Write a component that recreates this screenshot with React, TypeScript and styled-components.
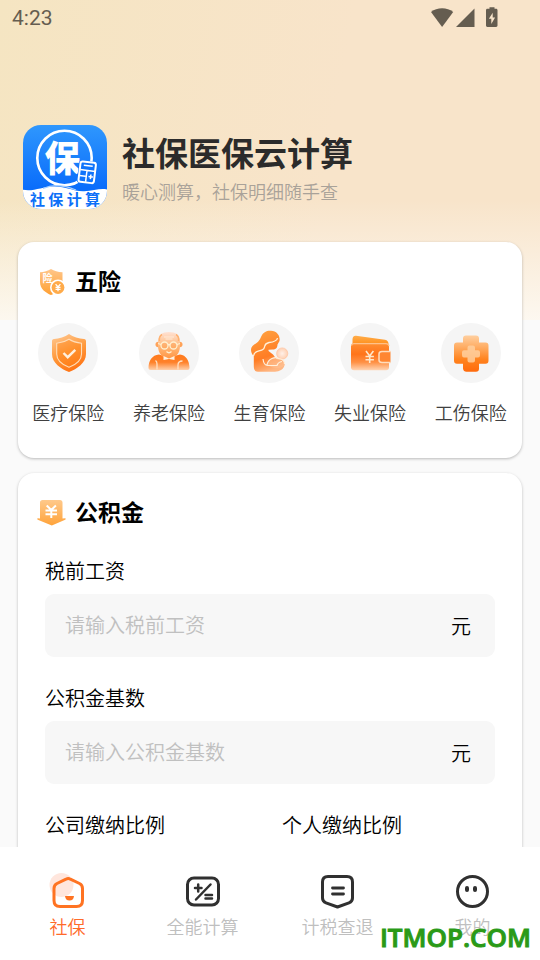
import React from "react";
import styled, { createGlobalStyle } from "styled-components";

const GlobalStyle = createGlobalStyle`
  *, *::before, *::after { box-sizing: border-box; }
  body {
    margin: 0;
    background: #fafafa;
    font-family: Roboto, "Noto Sans CJK SC", sans-serif;
    font-weight: 350;
    color: #000;
  }
  h1, h2, p { margin: 0; }
  button, input { font: inherit; color: inherit; border: 0; padding: 0; background: none; }
`;

const Screen = styled.div`
  position: relative;
  height: 100vh;
  display: flex;
  flex-direction: column;
  overflow: hidden;
  background:
    linear-gradient(to bottom, rgba(250, 250, 250, 0) 200px, rgba(253, 250, 244, 0.9) 320px, transparent 320px),
    linear-gradient(100deg, #f5e5c2, #f8e4ca 60%) top / 100% 320px no-repeat,
    #fafafa;
`;

const StatusBar = styled.header`
  flex: none;
  height: 36px;
  padding: 0 40px 0 12px;
  display: flex;
  align-items: center;
  justify-content: space-between;
  color: #655d50;
  font-size: 21px;
  line-height: 24px;
  font-weight: 450;
`;

const Content = styled.main`
  flex: 1;
  min-height: 0;
  overflow-y: auto;
  scrollbar-width: none;
  padding: 89px 18px 0;
  display: flex;
  flex-direction: column;
`;

const Profile = styled.section`
  display: flex;
  align-items: center;
  gap: 15px;
  padding: 0 5px;
  margin-bottom: 33px;
`;

const ProfileText = styled.div`
  padding-top: 5px;
`;

const Logo = styled.div`
  position: relative;
  flex: none;
  width: 84px;
  height: 84px;
  border-radius: 18px;
  overflow: hidden;
  display: flex;
  flex-direction: column;
  justify-content: flex-end;

  svg { position: absolute; inset: 0; }
`;

const LogoCaption = styled.div`
  position: relative;
  display: flex;
  justify-content: space-between;
  padding: 0 7px;
  font-size: 15px;
  line-height: 18px;
  font-weight: 700;
  color: #0d70f8;
`;

const AppName = styled.h1`
  font-size: 33px;
  line-height: 44px;
  font-weight: 700;
  color: #2b2b2b;
`;

const Tagline = styled.p`
  font-size: 18px;
  line-height: 28px;
  color: #a9a299;
  margin-top: 2px;
`;

const Card = styled.section`
  flex: none;
  background: #fff;
  border-radius: 16px;
  padding-bottom: 31px;
  margin-bottom: 15px;
  box-shadow: 0 1px 3px rgba(0, 0, 0, 0.26);
`;

const CardHeader = styled.div`
  display: flex;
  align-items: center;
  gap: 9px;
  padding: 24px 20px 0 19px;
`;

const CardTitle = styled.h2`
  font-size: 23px;
  line-height: 34px;
  font-weight: 600;
`;

const ServiceGrid = styled.div`
  display: grid;
  grid-template-columns: repeat(5, 1fr);
  padding: 23px 1px 0 0;
`;

const Service = styled.button`
  display: flex;
  flex-direction: column;
  align-items: center;
  gap: 18px;
  font-size: 18px;
  line-height: 26px;
  color: #404040;
  white-space: nowrap;
`;

const ServiceIcon = styled.span`
  width: 60px;
  height: 60px;
  border-radius: 50%;
  background: #f5f5f5;
  display: block;
`;

const Form = styled.form`
  padding: 26px 27px 0;
  display: flex;
  flex-direction: column;
  gap: 27px;
`;

const FieldGroup = styled.div`
  display: flex;
  flex-direction: column;
  gap: 7px;
  min-width: 0;
`;

const FieldRow = styled.div`
  display: grid;
  grid-template-columns: 1fr 1fr;
  gap: 24px;
`;

const FieldLabel = styled.label`
  font-size: 20px;
  line-height: 30px;
`;

const FieldBox = styled.div`
  display: flex;
  align-items: center;
  height: 63px;
  border-radius: 9px;
  background: #f7f7f7;
  padding: 0 24px 0 20px;
  font-size: 20px;
`;

const TextInput = styled.input`
  flex: 1;
  min-width: 0;
  height: 100%;
  outline: none;

  &::placeholder { color: #c0c0c0; opacity: 1; }
`;

const TabBar = styled.nav`
  flex: none;
  background: #fff;
  display: grid;
  grid-template-columns: repeat(4, 1fr);
  padding: 24px 0 19px;
`;

const Tab = styled.button<{ $active?: boolean }>`
  display: flex;
  flex-direction: column;
  align-items: center;
  gap: 4px;
  font-size: 18px;
  line-height: 26px;
  color: ${(p) => (p.$active ? "#ff6a2a" : "#bfbfbf")};

  svg { display: block; }
`;

const Watermark = styled.div`
  position: absolute;
  right: 9px;
  bottom: 6px;
  font-family: "Open Sans", sans-serif;
  font-size: 26px;
  line-height: 34px;
  font-weight: 600;
  color: #2a9a17;
  -webkit-text-stroke: 1px #2a9a17;
  pointer-events: none;
`;

const StatusIcons = () => (
  <svg width="70" height="22" viewBox="0 0 70 22" fill="currentColor" aria-hidden="true">
    <path d="M1 5C4 2.400 8 1.200 12.100 1.200S20 2.400 23.200 5L12.100 20Z" />
    <path d="M44.500 1.500V20H26Z" />
    <path
      fillRule="evenodd"
      d="M59.500 .2h5v1.600h1.600c.8 0 1.400.6 1.400 1.400v15.400c0 .8-.6 1.400-1.400 1.400h-8.700c-.8 0-1.400-.6-1.400-1.400V3.200c0-.8.6-1.400 1.400-1.400h2.100Zm3.200 5.600-3.800 6h2.400v5.200l3.800-6.600h-2.400Z"
    />
  </svg>
);

const LogoArt = () => (
  <svg width="84" height="84" viewBox="0 0 84 84" aria-hidden="true">
    <defs>
      <linearGradient id="logoBg" x1="0" y1="0" x2="0" y2="1">
        <stop offset="0" stopColor="#2f97fd" />
        <stop offset="0.75" stopColor="#0a6dfb" />
      </linearGradient>
    </defs>
    <rect width="84" height="84" fill="url(#logoBg)" />
    <circle cx="41.5" cy="33" r="27.2" fill="none" stroke="#fff" strokeWidth="2.6" />
    <text x="39.500" y="46.500" textAnchor="middle" fontSize="36" fontWeight="900" fill="#fff" fontFamily='"Noto Sans CJK SC", sans-serif'>保</text>
    <g transform="rotate(7 64 47)" stroke="#fff" fill="none">
      <rect x="55" y="36" width="19" height="23" rx="3" fill="#0f74fb" stroke="none" />
      <rect x="56.500" y="37" width="15.500" height="20.500" rx="2.200" fill="#0f74fb" strokeWidth="2" />
      <path d="M60 40.700H69M57 45.400H72M63.800 45.400V57M57 51.500H63M66 51.300H70.500M68.200 49V53.600" strokeWidth="1.500" />
    </g>
    <path d="M0 64.800C11 67 20 61 32 61.500C43 61.500 49 66 60 66.200C70 66.500 76 63 84 64.500V84H0Z" fill="#fff" />
    <path d="M20 63.500C31 58.500 42 60.500 53 65" fill="none" stroke="#a8d0ff" strokeWidth="1.200" />
  </svg>
);

const InsuranceMark = () => (
  <svg width="29" height="28" viewBox="0 1 29 28" aria-hidden="true">
    <defs>
      <linearGradient id="markA" x1="0" y1="0" x2="0" y2="1">
        <stop offset="0" stopColor="#ffc68a" />
        <stop offset="1" stopColor="#ffa033" />
      </linearGradient>
    </defs>
    <path d="M3 4.2C7 4.2 11 2.8 14 1C17 2.8 21 4.2 25.5 4.2V14C25.5 21 19 25 14 27C9 25 3 21 3 14Z" fill="url(#markA)" />
    <text x="10.500" y="13.500" textAnchor="middle" fontSize="10" fontWeight="700" fill="#fff" fontFamily='"Noto Sans CJK SC", sans-serif'>险</text>
    <circle cx="21" cy="19.500" r="8" fill="#fff" />
    <circle cx="21" cy="19.500" r="6.400" fill="#ffab4a" />
    <path d="M18.6 16.2 21 19 23.4 16.2M21 19V23.2M18.5 19.3H23.5M18.5 21.3H23.5" stroke="#fff" strokeWidth="1.300" fill="none" />
  </svg>
);

const FundMark = () => (
  <svg width="29" height="28" viewBox="0 1 29 28" aria-hidden="true">
    <defs>
      <linearGradient id="markB" x1="0" y1="0" x2="0" y2="1">
        <stop offset="0" stopColor="#ffc98b" />
        <stop offset="1" stopColor="#ffa33a" />
      </linearGradient>
    </defs>
    <path d="M3 3.5C3 2 4 1 5.500 1H23C24.500 1 25.500 2 25.500 3.500V19.500L28 19.200C29 19.200 29 20.300 28.200 20.700L14.800 26.500L.800 20.700C-.200 20.200 0 19.200 1 19.200L3 19.500Z" fill="url(#markB)" />
    <path d="M9.700 6.500 14.300 11 18.900 6.500M14.300 11V19M8.500 11.500H20M8.500 15.300H20" fill="none" stroke="#fff" strokeWidth="2" />
  </svg>
);

const ShieldIcon = () => (
  <svg viewBox="0 0 60 60" aria-hidden="true">
    <defs>
      <linearGradient id="shield" x1="0.2" y1="0" x2="0.6" y2="1">
        <stop offset="0" stopColor="#ffc58c" />
        <stop offset="0.5" stopColor="#ff9a3d" />
        <stop offset="1" stopColor="#ff7212" />
      </linearGradient>
    </defs>
    <path d="M31 11C35 14 41 15.500 46 16C47.500 16.200 48 17 48 18.500V31C48 40 39 46 31 49C23 46 14 40 14 31V18.500C14 17 14.500 16.200 16 16C21 15.500 27 14 31 11Z" fill="url(#shield)" />
    <path d="M31 16.200C34.500 18.500 39 19.800 43.500 20.300V31C43.500 37.500 37 42 31 44.300C25 42 18.700 37.500 18.700 31V20.300C23 19.800 27.500 18.500 31 16.200Z" fill="#ff8012" fillOpacity=".35" stroke="#ffddb8" strokeWidth="1.100" />
    <path d="m25.500 30 4.200 4.200 7.600-7.400" fill="none" stroke="#fff0dd" strokeWidth="2.400" />
  </svg>
);

const ElderIcon = () => (
  <svg viewBox="0 0 60 60" aria-hidden="true">
    <defs>
      <linearGradient id="elderHead" x1="0" y1="0" x2="0" y2="1">
        <stop offset="0" stopColor="#ffe2d4" />
        <stop offset="0.55" stopColor="#ffb778" />
        <stop offset="1" stopColor="#ff9645" />
      </linearGradient>
      <linearGradient id="elderBody" x1="0" y1="0" x2="0" y2="1">
        <stop offset="0" stopColor="#ff7a1c" />
        <stop offset="0.5" stopColor="#ff8129" />
        <stop offset="1" stopColor="#ffd0ab" />
      </linearGradient>
    </defs>
    <path d="M9.500 45C9.500 38 13 32 20 31.500L25 33H35L41 31.500C47 32 50.500 38 50.500 45Q50.500 47 48.500 47H11.500Q9.500 47 9.500 45Z" fill="url(#elderBody)" />
    <circle cx="19.300" cy="21.500" r="2.800" fill="#ffa258" />
    <circle cx="40.700" cy="21.500" r="2.800" fill="#ffa258" />
    <path d="M19 19C19 12 23 9 30 9S41 12 41 19V23C41 31 36 35.500 30 35.500S19 31 19 23Z" fill="url(#elderHead)" />
    <path d="M20.500 18C20 14.500 21 12.500 23 11.500M39.500 18C40 14.500 39 12.500 37 11.500" stroke="#ffb170" strokeWidth="1.400" fill="none" />
    <path d="M25 14H35M26.500 16H33.500" stroke="#fff2e4" strokeWidth=".8" fill="none" />
    <g fill="#ff9f52" fillOpacity=".4" stroke="#fff0d0" strokeWidth="1.300">
      <circle cx="25.500" cy="22.500" r="3.500" />
      <circle cx="34.500" cy="22.500" r="3.500" />
      <path d="M29 22Q30 21 31 22M22 21.500 19 20.500M38 21.500 41 20.500" />
      <path d="M27.500 28.500Q30 31 32.500 28.500" fill="none" />
    </g>
    <path d="m24.500 33 5.500 2.500 5.500-2.500v4L30 36 24.500 37Z" fill="#fff0df" />
    <path d="M18 46.500V41Q18 38.500 16.500 37.500M39 46.500V42Q39 38 43.500 38" stroke="#ffe0c2" strokeWidth="1.300" fill="none" />
  </svg>
);

const MotherIcon = () => (
  <svg viewBox="0 0 60 60" aria-hidden="true">
    <defs>
      <linearGradient id="mother" x1="0.2" y1="0" x2="0.5" y2="1">
        <stop offset="0" stopColor="#ffa13f" />
        <stop offset="0.65" stopColor="#ff7d25" />
        <stop offset="1" stopColor="#ffb783" />
      </linearGradient>
      <radialGradient id="baby">
        <stop offset="0" stopColor="#fff0e8" />
        <stop offset="1" stopColor="#ffd0b2" />
      </radialGradient>
    </defs>
    <path d="M22 14C24 9 28 7.500 32 7.800C38 8 41.500 13 40.500 18L38.500 21.500C38.500 24.500 37 26.500 33.500 26.500L29.500 26.800C29 29 33.500 29.500 35.500 33.500L37.500 36L43 37C47 39 46 45 42 47Q39.500 48.800 36 48.800H19C16 48.800 14.800 46.500 14.800 43.500V33C11.500 30 11 25 14 22.500C18 19.500 20 19 22 14Z" fill="url(#mother)" />
    <path d="M14.500 33C15 27 21 29 24.500 26C27 23 24 21 30 19.500C35 19 38 18 38.500 15" fill="none" stroke="#fff0d8" strokeWidth="1.300" />
    <circle cx="43.200" cy="30.500" r="5.600" fill="url(#baby)" stroke="#ffc3a0" strokeWidth=".7" />
    <path d="M28.500 42C29 36 36 32.500 41 35C44 36.500 46 39 46 42C42 46 34 46 28.500 42Z" fill="#ffc69c" fillOpacity=".5" />
    <path d="M24 36C24.500 40 26 42.500 28.500 42.500M28 42C29 36 36 33 40 35.500C43 36 45.500 38 45.500 41M28 42.500H38Q39 39 43 38.500" fill="none" stroke="#fff0dc" strokeWidth="1.200" />
  </svg>
);

const WalletIcon = () => (
  <svg viewBox="0 0 60 60" aria-hidden="true">
    <defs>
      <linearGradient id="walletBack" x1="0" y1="0" x2="0" y2="1">
        <stop offset="0" stopColor="#ffad4a" />
        <stop offset="1" stopColor="#ff8913" />
      </linearGradient>
      <linearGradient id="walletFront" x1="0" y1="0" x2="0" y2="1">
        <stop offset="0" stopColor="#ff8e32" />
        <stop offset="0.4" stopColor="#ff741a" />
        <stop offset="0.7" stopColor="#ff9145" />
        <stop offset="1" stopColor="#ffd5b4" />
      </linearGradient>
    </defs>
    <path d="M12.500 22V16Q13 12.500 16 12.800L45 16.800Q48.500 17.500 48.500 21V23Z" fill="url(#walletBack)" />
    <rect x="11" y="20.500" width="38" height="26.800" rx="3" fill="url(#walletFront)" />
    <path d="M11.500 22.500Q12 20.700 14 20.700H46Q48.500 20.700 49 23" fill="none" stroke="#ffc189" strokeWidth="1.200" />
    <path d="M50.500 28.500H42Q39 28.500 39 31V37Q39 39.500 42 39.500H50.500Z" fill="#ff8632" />
    <path d="M50.500 28.500H42Q39 28.500 39 31V37Q39 39.500 42 39.500H50.500" fill="none" stroke="#ffddbd" strokeWidth="1.500" />
    <path d="m26 28 3.700 5 3.700-5M29.700 33v7M25.500 33.500h8.400M25.500 36.800h8.400" fill="none" stroke="#ffe8ca" strokeWidth="1.600" />
  </svg>
);

const CrossIcon = () => (
  <svg viewBox="0 0 60 60" aria-hidden="true">
    <defs>
      <linearGradient id="cross" x1="0.5" y1="0" x2="0.5" y2="1">
        <stop offset="0" stopColor="#ffcf9f" />
        <stop offset="0.3" stopColor="#ffaf67" />
        <stop offset="0.65" stopColor="#ff841f" />
        <stop offset="1" stopColor="#ff6a0c" />
      </linearGradient>
    </defs>
    <path d="M25 12.500H35Q38 12.500 38 15.500V19.500H44.500Q47.500 19.500 47.500 22.500V37.500Q47.500 40.800 44.500 40.800H38V45.500Q38 48.800 35 48.800H25.500Q22.500 48.800 22 45.500V40.800H16Q13 40.800 13 37.500V22.500Q13 19.500 16 19.500H22V15.500Q22 12.500 25 12.500Z" fill="url(#cross)" />
    <path d="M28.500 22.500H32Q34 22.500 34 24.500V27.300H37Q39 27.300 39 29.300V32.300Q39 34.500 37 34.500H34V37.500Q34 39.500 32 39.500H28.500Q26.500 39.500 26.500 37.500V34.500H23Q21 34.500 21 32.300V29.300Q21 27.300 23 27.300H26.500V24.500Q26.500 22.500 28.500 22.500Z" fill="#ffcf9e" fillOpacity=".85" />
  </svg>
);

const HomeTabIcon = () => (
  <svg width="40" height="40" viewBox="0 0 40 40" fill="none" aria-hidden="true">
    <circle cx="13.500" cy="14" r="12" fill="#ffe6dd" />
    <path d="M18 8.200Q20.200 7 22.400 8.200L31.500 12.500Q34.500 14 34.500 17.500V29.500Q34.500 35.500 28.500 35.500H12Q6 35.500 6 29.500V17.500Q6 14 9 12.500Z" stroke="#ff7322" strokeWidth="3" />
    <path d="M17 25H26Q25.500 29.500 21.500 29.500T17 25Z" fill="#ff7322" />
  </svg>
);

const CalcTabIcon = () => (
  <svg width="40" height="40" viewBox="0 0 40 40" fill="none" stroke="#303030" strokeLinecap="round" aria-hidden="true">
    <rect x="4.500" y="7" width="31" height="27" rx="6.500" strokeWidth="3" />
    <path d="M12 17H18.500M15.200 13.500V20.500M13 28.500 27.500 13.500M22.500 24H29M22.500 27.500H29" strokeWidth="2.500" />
  </svg>
);

const TaxTabIcon = () => (
  <svg width="40" height="40" viewBox="0 0 40 40" fill="none" stroke="#303030" strokeLinecap="round" strokeLinejoin="round" aria-hidden="true">
    <path d="M10 5.500H29Q34.500 5.500 34.500 11V27Q34.500 30.500 31 31.800L19.500 36L8 31.800Q4.500 30.500 4.500 27V11Q4.500 5.500 10 5.500Z" strokeWidth="3" />
    <path d="M14.500 17H25.500M14.500 23H25.500" strokeWidth="2.800" />
  </svg>
);

const FaceTabIcon = () => (
  <svg width="40" height="40" viewBox="0 0 40 40" fill="none" stroke="#303030" strokeLinecap="round" aria-hidden="true">
    <circle cx="19.500" cy="20.500" r="15" strokeWidth="3" />
    <path d="M14 17V19M22 17V19" strokeWidth="4" />
  </svg>
);

const services = [
  { label: "医疗保险", Icon: ShieldIcon },
  { label: "养老保险", Icon: ElderIcon },
  { label: "生育保险", Icon: MotherIcon },
  { label: "失业保险", Icon: WalletIcon },
  { label: "工伤保险", Icon: CrossIcon },
];

const tabs = [
  { label: "社保", Icon: HomeTabIcon },
  { label: "全能计算", Icon: CalcTabIcon },
  { label: "计税查退", Icon: TaxTabIcon },
  { label: "我的", Icon: FaceTabIcon },
];

const AmountField = ({ id, label }: { id: string; label: string }) => (
  <FieldGroup>
    <FieldLabel htmlFor={id}>{label}</FieldLabel>
    <FieldBox>
      <TextInput id={id} inputMode="decimal" placeholder={`请输入${label}`} />
      <span>元</span>
    </FieldBox>
  </FieldGroup>
);

const RatioField = ({ id, label }: { id: string; label: string }) => (
  <FieldGroup>
    <FieldLabel htmlFor={id}>{label}</FieldLabel>
    <FieldBox>
      <TextInput id={id} inputMode="decimal" />
    </FieldBox>
  </FieldGroup>
);

export default function App() {
  return (
    <>
      <GlobalStyle />
      <Screen>
        <StatusBar>
          <span>4:23</span>
          <StatusIcons />
        </StatusBar>
        <Content>
          <Profile>
            <Logo>
              <LogoArt />
              <LogoCaption>
                <span>社</span>
                <span>保</span>
                <span>计</span>
                <span>算</span>
              </LogoCaption>
            </Logo>
            <ProfileText>
              <AppName>社保医保云计算</AppName>
              <Tagline>暖心测算，社保明细随手查</Tagline>
            </ProfileText>
          </Profile>
          <Card>
            <CardHeader>
              <InsuranceMark />
              <CardTitle>五险</CardTitle>
            </CardHeader>
            <ServiceGrid>
              {services.map(({ label, Icon }) => (
                <Service key={label} type="button">
                  <ServiceIcon>
                    <Icon />
                  </ServiceIcon>
                  {label}
                </Service>
              ))}
            </ServiceGrid>
          </Card>
          <Card>
            <CardHeader>
              <FundMark />
              <CardTitle>公积金</CardTitle>
            </CardHeader>
            <Form>
              <AmountField id="salary" label="税前工资" />
              <AmountField id="base" label="公积金基数" />
              <FieldRow>
                <RatioField id="company" label="公司缴纳比例" />
                <RatioField id="personal" label="个人缴纳比例" />
              </FieldRow>
            </Form>
          </Card>
        </Content>
        <TabBar>
          {tabs.map(({ label, Icon }, i) => (
            <Tab key={label} type="button" $active={i === 0}>
              <Icon />
              {label}
            </Tab>
          ))}
        </TabBar>
        <Watermark>ITMOP.COM</Watermark>
      </Screen>
    </>
  );
}
